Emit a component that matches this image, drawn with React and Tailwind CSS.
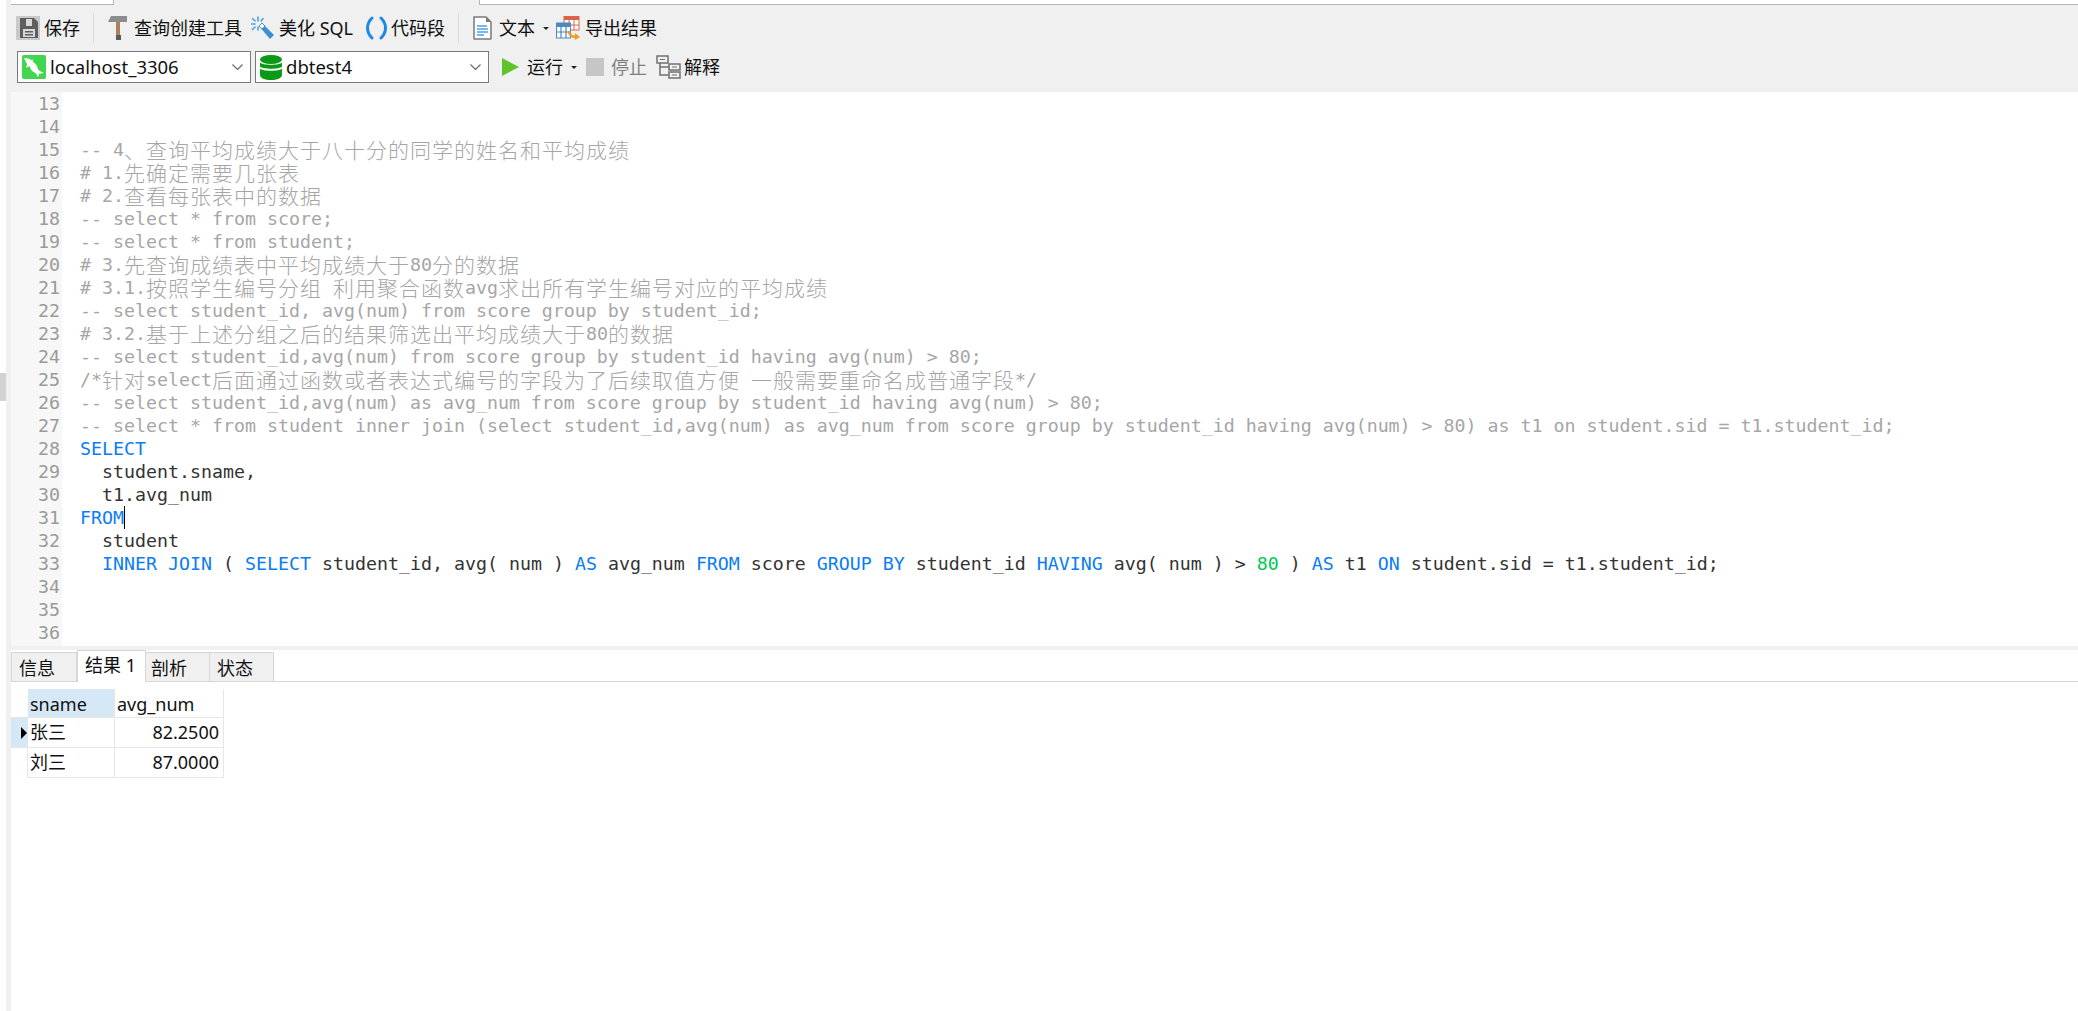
import React from 'react';

const UI_FONT = 'font-["Noto_Sans","Noto_Sans_CJK_SC",sans-serif]';

const K = '#0a7df5';
const T = '#333333';
const N = '#00c853';

// comments are plain strings, sql lines are lists of [text, color]
const LINES = [
  { no: 13 },
  { no: 14 },
  { no: 15, text: '-- 4、查询平均成绩大于八十分的同学的姓名和平均成绩' },
  { no: 16, text: '# 1.先确定需要几张表' },
  { no: 17, text: '# 2.查看每张表中的数据' },
  { no: 18, text: '-- select * from score;' },
  { no: 19, text: '-- select * from student;' },
  { no: 20, text: '# 3.先查询成绩表中平均成绩大于80分的数据' },
  { no: 21, text: '# 3.1.按照学生编号分组 利用聚合函数avg求出所有学生编号对应的平均成绩' },
  { no: 22, text: '-- select student_id, avg(num) from score group by student_id;' },
  { no: 23, text: '# 3.2.基于上述分组之后的结果筛选出平均成绩大于80的数据' },
  { no: 24, text: '-- select student_id,avg(num) from score group by student_id having avg(num) > 80;' },
  { no: 25, text: '/*针对select后面通过函数或者表达式编号的字段为了后续取值方便 一般需要重命名成普通字段*/' },
  { no: 26, text: '-- select student_id,avg(num) as avg_num from score group by student_id having avg(num) > 80;' },
  { no: 27, text: '-- select * from student inner join (select student_id,avg(num) as avg_num from score group by student_id having avg(num) > 80) as t1 on student.sid = t1.student_id;' },
  { no: 28, tokens: [['SELECT', K]] },
  { no: 29, tokens: [['  student.sname,', T]] },
  { no: 30, tokens: [['  t1.avg_num', T]] },
  { no: 31, tokens: [['FROM', K]], caret: true },
  { no: 32, tokens: [['  student', T]] },
  {
    no: 33,
    tokens: [
      ['  ', T], ['INNER JOIN', K], [' ( ', T], ['SELECT', K], [' student_id, avg( num ) ', T], ['AS', K],
      [' avg_num ', T], ['FROM', K], [' score ', T], ['GROUP BY', K], [' student_id ', T], ['HAVING', K],
      [' avg( num ) > ', T], ['80', N], [' ) ', T], ['AS', K], [' t1 ', T], ['ON', K],
      [' student.sid = t1.student_id;', T],
    ],
  },
  { no: 34 },
  { no: 35 },
  { no: 36 },
];

function CodeText({ text, color }) {
  // cjk runs are double width in the editor font
  const parts = text.split(/([\u3000-\u9fff\uff00-\uffef]+)/);
  return parts.map((p, i) =>
    i % 2 === 1 ? (
      <span
        key={i}
        style={{ color }}
        className='inline-block align-top h-[23px] leading-[23px] font-["Noto_Sans_CJK_SC",sans-serif] text-[21px] tracking-[1px] font-light'
      >
        {p}
      </span>
    ) : (
      <span key={i} style={{ color }} className="inline-block align-top h-[23px] leading-[23px]">{p}</span>
    )
  );
}

function CodeLine({ line }) {
  return (
    <div className="flex h-[23px] leading-[23px] items-start">
      <div className="w-[51px] h-[23px] shrink-0 bg-[#f7f7f7] text-right text-[#9a9a9a] pr-[2px]">{line.no}</div>
      <div className="ml-[18px] whitespace-pre h-[23px]">
        {line.text && <CodeText text={line.text} color="#a6a6a6" />}
        {line.tokens && line.tokens.map(([t, c], i) => <CodeText key={i} text={t} color={c} />)}
        {line.caret && <span className="inline-block w-px h-[23px] bg-black align-top" />}
      </div>
    </div>
  );
}

function SaveIcon() {
  return (
    <svg width="24" height="24" viewBox="0 0 24 24" className="shrink-0">
      <rect width="24" height="24" fill="#c9c9c9" />
      <path d="M4 2h14l4 4v16H4z" fill="#5e5e5e" />
      <rect x="10" y="3" width="6" height="7" fill="#d8d8d8" />
      <rect x="7" y="13" width="12" height="8" fill="#d8d8d8" />
      <rect x="9" y="15" width="8" height="1.5" fill="#5e5e5e" />
      <rect x="9" y="18" width="8" height="1.5" fill="#5e5e5e" />
    </svg>
  );
}

function HammerIcon() {
  return (
    <svg width="19" height="24" viewBox="0 0 19 24" className="shrink-0">
      <path d="M3 0h16v6H0z" fill="#8c8c8c" />
      <rect x="8" y="6" width="4" height="14" fill="#a9825a" />
      <rect x="8" y="19" width="5" height="5" fill="#5c5c5c" />
    </svg>
  );
}

function WandIcon() {
  return (
    <svg width="23" height="24" viewBox="0 0 23 24" className="shrink-0">
      <path d="M8 10l3-3 12 12-4 4z" fill="#3d8fd1" />
      <path d="M8 10l3-3 3 3-3 3z" fill="#ffffff" stroke="#3d8fd1" strokeWidth="1" />
      <g stroke="#4aa3df" strokeWidth="1.6" strokeLinecap="round">
        <path d="M7 1v4M7 11v3M0 8h4M1.5 2.5l2.5 2.5M12 2.5L10 5M1.5 13.5L4 11" />
      </g>
    </svg>
  );
}

function ParensIcon() {
  return (
    <svg width="23" height="24" viewBox="0 0 23 24" className="shrink-0" fill="none" stroke="#1e88e5" strokeWidth="3" strokeLinecap="round">
      <path d="M7 2C1 8 1 16 7 22" />
      <path d="M16 2c6 6 6 14 0 20" />
    </svg>
  );
}

function DocIcon() {
  return (
    <svg width="19" height="24" viewBox="0 0 19 24" className="shrink-0">
      <path d="M1 1h12l5 5v16.5a.5.5 0 0 1-.5.5H1.500a.5.5 0 0 1-.5-.5z" fill="#fff" stroke="#7a7a7a" strokeWidth="1.500" />
      <path d="M13 1v5h5z" fill="#7a7a7a" />
      <path d="M4 10h10M4 13h11M4 16h11M4 19h7" stroke="#4aa3e8" strokeWidth="1.300" />
    </svg>
  );
}

function ExportIcon() {
  return (
    <svg width="24" height="24" viewBox="0 0 24 24" className="shrink-0">
      <rect x="8" y="0" width="15" height="14" fill="#fff" stroke="#d9644a" strokeWidth="1" />
      <rect x="8" y="0" width="15" height="4" fill="#d9644a" />
      <path d="M13 4v10M18 4v10M8 9h15" stroke="#d9644a" strokeWidth="1" />
      <rect x="0.500" y="7" width="14" height="15" fill="#fff" stroke="#4a88c0" strokeWidth="1" />
      <rect x="0" y="7" width="15" height="4" fill="#4a88c0" />
      <path d="M5 11v11M10 11v11M1 16h13" stroke="#4a88c0" strokeWidth="1.200" />
      <path d="M13 15c0 5 3 6 7 6" fill="none" stroke="#f59a23" strokeWidth="2.400" />
      <path d="M19 17l5 4-5 3z" fill="#f59a23" />
    </svg>
  );
}

function DolphinIcon() {
  return (
    <svg width="24" height="24" viewBox="0 0 24 24" className="shrink-0">
      <rect width="24" height="24" rx="2" fill="#42d64f" />
      <path
        d="M2 3c3 0 5 .5 7 2 1-.5 2-.5 2.500 0L10.500 6.500c3 1.500 5 4.500 5.500 8 1.500 1.500 3.500 2.500 6 3-1.500 1-3.500 1.500-5 1 0 1.500-.5 2.500-1.500 3.500-.5-1.500-1-3-2-4-3-1-5-3.500-6-7-1.500 1-2.500 1.500-3.500 1.500.5-1 1-2.500 1-3.500C4 7 3 5 2 3z"
        fill="#fff"
      />
    </svg>
  );
}

function DbIcon() {
  return (
    <svg width="22" height="25" viewBox="0 0 22 25" className="shrink-0">
      <ellipse cx="11" cy="4.500" rx="11" ry="4.500" fill="#0a9a16" />
      <path d="M0 7.500c2 3 20 3 22 0v4c-2 3-20 3-22 0z" fill="#0a9a16" />
      <path d="M0 13.500c2 3 20 3 22 0v6.500c0 3-5 5-11 5s-11-2-11-5z" fill="#0a9a16" />
    </svg>
  );
}

function ExplainIcon() {
  return (
    <svg width="25" height="24" viewBox="0 0 25 24" className="shrink-0" fill="none" stroke="#707070" strokeWidth="1.500">
      <rect x="1" y="1" width="11" height="7" />
      <rect x="13" y="9" width="11" height="6" />
      <rect x="13" y="17" width="11" height="6" />
      <path d="M4 8v12h9M4 12h9" />
      <path d="M4 4.500h5M16 12h5M16 20h5" strokeWidth="1.200" />
    </svg>
  );
}

function Caret() {
  return <span className="w-0 h-0 border-x-[3px] border-x-transparent border-t-[3px] border-t-[#222] shrink-0" />;
}

function Chevron() {
  return (
    <svg width="11" height="6" viewBox="0 0 11 6" fill="none" stroke="#6a6a6a" strokeWidth="1.200" className="shrink-0">
      <path d="M.5.500l5 5 5-5" />
    </svg>
  );
}

function Combo({ icon, label }) {
  return (
    <div className="w-[234px] h-[32px] bg-white border border-[#7a7a7a] flex items-center pl-[4px] pr-[7px] shrink-0">
      {icon}
      <span className="ml-[4px] flex-1 text-[18.5px] text-[#111]">{label}</span>
      <Chevron />
    </div>
  );
}

function Divider() {
  return <div className="w-px h-[30px] bg-[#d9d9d9] shrink-0" />;
}

function Tab({ label, active, className }) {
  if (active) {
    return (
      <div className={`h-[32px] -mb-px bg-white border-x border-t border-[#d6d6d6] flex items-center text-[18px] text-[#111] pb-[3px] ${className}`}>
        {label}
      </div>
    );
  }
  return (
    <div className={`h-[29px] bg-[#f0f0f0] border-r border-t border-[#d6d6d6] flex items-center text-[18px] text-[#111] pt-[2px] ${className}`}>
      {label}
    </div>
  );
}

export default function App() {
  return (
    <div className={`w-full h-screen flex bg-white overflow-hidden ${UI_FONT}`}>
      {/* left edge of the window */}
      <div className="w-[6px] shrink-0 pt-[373px]">
        <div className="h-[28px] bg-[#d3d3d3]" />
      </div>

      <div className="flex-1 flex flex-col bg-[#f0f0f0] min-w-0">
        {/* rest of the window above */}
        <div className="h-[5px] flex shrink-0">
          <div className="w-[5px] shrink-0" />
          <div className="w-[103px] bg-white border-r border-b border-[#b5b5b5]" />
          <div className="w-[365px]" />
          <div className="flex-1 bg-white border-l border-b border-[#b5b5b5]" />
        </div>

        {/* toolbar */}
        <div className="h-[87px] shrink-0 text-[18px] text-[#111]">
          <div className="h-[46px] flex items-center pl-[10px]">
            <SaveIcon />
            <span className="ml-[4px]">保存</span>
            <div className="ml-[13px]"><Divider /></div>
            <div className="ml-[14px]"><HammerIcon /></div>
            <span className="ml-[7px]">查询创建工具</span>
            <div className="ml-[9px]"><WandIcon /></div>
            <span className="ml-[5px]">美化 SQL</span>
            <div className="ml-[12px]"><ParensIcon /></div>
            <span className="ml-[3px]">代码段</span>
            <div className="ml-[13px]"><Divider /></div>
            <div className="ml-[14px]"><DocIcon /></div>
            <span className="ml-[7px]">文本</span>
            <div className="ml-[8px] flex"><Caret /></div>
            <div className="ml-[7px]"><ExportIcon /></div>
            <span className="ml-[5px]">导出结果</span>
          </div>
          <div className="h-[32px] flex items-center pl-[11px]">
            <Combo icon={<DolphinIcon />} label="localhost_3306" />
            <div className="ml-[4px]"><Combo icon={<DbIcon />} label="dbtest4" /></div>
            <svg width="18" height="18" viewBox="0 0 18 18" className="ml-[13px] shrink-0">
              <path d="M0 0l17 9-17 9z" fill="#5fc32a" />
            </svg>
            <span className="ml-[7px]">运行</span>
            <div className="ml-[8px] flex"><Caret /></div>
            <div className="ml-[9px] w-[18px] h-[18px] bg-[#c6c6c6] shrink-0" />
            <span className="ml-[7px] text-[#808080]">停止</span>
            <div className="ml-[9px]"><ExplainIcon /></div>
            <span className="ml-[3px]">解释</span>
          </div>
        </div>

        {/* editor */}
        <div className='h-[554px] shrink-0 ml-[5px] bg-white font-["DejaVu_Sans_Mono",monospace] text-[18.27px]'>
          {LINES.map((l) => <CodeLine key={l.no} line={l} />)}
          <div className="w-[51px] h-[2px] bg-[#f7f7f7]" />
        </div>

        {/* results */}
        <div className="h-[4px] shrink-0" />
        <div className="flex-1 ml-[5px] bg-white min-h-0">
          <div className="h-[32px] flex items-end border-b border-[#d6d6d6]">
            <Tab label="信息" className="w-[66px] border-l pl-[7px]" />
            <Tab label="结果 1" active className="w-[69px] pl-[7px]" />
            <Tab label="剖析" className="w-[64px] pl-[5px]" />
            <Tab label="状态" className="w-[64px] pl-[7px]" />
          </div>

          <div className="pt-[7px] text-[18px] text-[#111]">
            <div className="flex h-[29px] w-[213px] border-b border-[#e6e6e6]">
              <div className="w-[17px] shrink-0 bg-white" />
              <div className="w-[87px] bg-[#d6e8f6] pl-[2px] leading-[30px] border-r border-[#e6e6e6]">sname</div>
              <div className="w-[109px] pl-[2px] leading-[30px] border-r border-[#e6e6e6]">avg_num</div>
            </div>
            <div className="flex h-[30px] border-b border-[#e6e6e6] w-[213px]">
              <div className="w-[17px] shrink-0 bg-[#d6e8f6] flex items-center justify-end pr-[1px]">
                <span className="w-0 h-0 border-y-[6px] border-y-transparent border-l-[6px] border-l-black" />
              </div>
              <div className="w-[87px] pl-[2px] leading-[29px] border-r border-[#e6e6e6]">张三</div>
              <div className="w-[109px] text-right pr-[4px] leading-[29px] border-r border-[#e6e6e6]">82.2500</div>
            </div>
            <div className="flex h-[30px] w-[213px]">
              <div className="w-[17px] shrink-0 border-r border-[#e6e6e6]" />
              <div className="w-[87px] pl-[2px] leading-[29px] border-r border-b border-[#e6e6e6]">刘三</div>
              <div className="w-[109px] text-right pr-[4px] leading-[29px] border-r border-b border-[#e6e6e6]">87.0000</div>
            </div>
          </div>
        </div>
      </div>
    </div>
  );
}
